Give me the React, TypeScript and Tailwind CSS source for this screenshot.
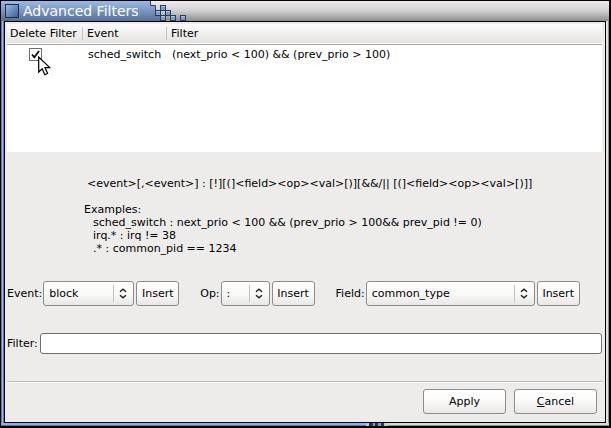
import React from 'react';

// Loose tiles that break off the end of the title tab
const TILES = [
    { x: 10, y: 10 },
    { x: 15, y: 5 },
    { x: 20, y: 10 },
    { x: 15, y: 15 },
    { x: 25, y: 15 },
    { x: 35, y: 15 },
];

const TitleSteps: React.FC = () => (
    <svg width="42" height="20" viewBox="0 0 42 20" className="block shrink-0" aria-hidden="true">
        <defs>
            <linearGradient id="title-blue" x1="0" y1="0" x2="0" y2="1">
                <stop offset="0" stopColor="#9dbbe6" />
                <stop offset="1" stopColor="#557098" />
            </linearGradient>
        </defs>
        <path d="M0 0H5V5H10V10H15V15H20V20H0Z" fill="url(#title-blue)" />
        <path d="M5.5 0V4.5H10.5V9.5H15.5V14.5H20.5V20" fill="none" stroke="#2c3c56" />
        {TILES.map(({ x, y }) => (
            <g key={`${x}-${y}`}>
                <rect x={x} y={y - 1} width="6" height="6" fill="#2c3c56" />
                <rect x={x + 1} y={y} width="4" height="4" fill="#7d9fcf" />
                <path d={`M${x + 1} ${y + 0.5}H${x + 5}`} stroke="#a9c5ec" />
            </g>
        ))}
    </svg>
);

const Cursor: React.FC = () => (
    <svg width="13" height="20" viewBox="0 0 13 20" className="pointer-events-none absolute top-2 left-[9px]" aria-hidden="true">
        <path d="M0.7 1V16L4.2 12.7L6.8 18.7L9.6 17.5L7 11.6H11.8Z" fill="#fff" stroke="#000" strokeWidth="1.2" />
    </svg>
);

type PickerProps = {
    id: string;
    label: string;
    options: string[];
    selectClass: string;
};

const Picker: React.FC<PickerProps> = ({ id, label, options, selectClass }) => (
    <div className="flex items-center">
        <label htmlFor={id} className="mr-px">{label}</label>
        <div className="relative mr-0.5">
            <select
                id={id}
                className={`block h-[25px] appearance-none rounded-[3px] border border-[#8c8c8a] bg-linear-to-b from-white via-[#f9f9f8] to-[#e9e8e6] pl-[5px] ${selectClass}`}
            >
                {options.map((option) => (
                    <option key={option}>{option}</option>
                ))}
            </select>
            <span className="pointer-events-none absolute inset-y-1 right-0 flex w-[21px] items-center justify-center border-l border-[#c2c1bf] pr-0.5">
                <svg width="8" height="11" viewBox="0 0 8 11" fill="none" stroke="#222" strokeWidth="1.5" aria-hidden="true">
                    <path d="M1 3.8L4 1.2L7 3.8M1 7.2L4 9.8L7 7.2" />
                </svg>
            </span>
        </div>
        <button type="button" className="h-[25px] w-[43px] rounded-[3px] border border-[#8c8c8a] bg-linear-to-b from-white via-[#f9f9f8] to-[#e9e8e6]">
            Insert
        </button>
    </div>
);

const App: React.FC = () => {
    return (
        <div className="flex min-h-screen flex-col bg-black pt-px pr-0.5 pb-0.5 pl-px font-['DejaVu_Sans',sans-serif] text-[11px] leading-[13px] text-black">
            <header className="flex h-5 bg-linear-to-b from-[#f0e9ee] via-[#d0d0d0] to-[#8d8d8d]">
                <div className="flex items-center bg-linear-to-b from-[#9dbbe6] to-[#557098] pl-1">
                    <span className="mr-1 size-[14px] border border-[#1b2c48] bg-linear-to-br from-[#9dbbe6] to-[#41608f]" />
                    <h1 className="mr-1.5 text-[14px] leading-5 text-white">Advanced Filters</h1>
                </div>
                <TitleSteps />
            </header>

            <div className="flex grow">
                <div className="w-[3px] shrink-0 border-x border-x-[#5b7cad] bg-[#9dbbe6]" />
                <main className="flex min-w-0 flex-1 flex-col border border-black bg-[#edeceb] px-0.5 pt-0.5">
                    <div className="mr-px h-32 bg-white">
                        <table className="w-full table-fixed border-collapse text-left">
                            <thead>
                                <tr className="h-5 border-b border-[#aaa5a0] bg-linear-to-b from-[#fcfbfb] to-[#e4e3e1]">
                                    <th className="w-[75px] px-[3px] font-normal whitespace-nowrap">Delete Filter</th>
                                    <th className="w-[84px] font-normal">
                                        <div className="border-l border-[#c6c4c1] pl-1">Event</div>
                                    </th>
                                    <th className="font-normal">
                                        <div className="border-l border-[#c6c4c1] pl-1">Filter</div>
                                    </th>
                                </tr>
                            </thead>
                            <tbody>
                                <tr className="h-5">
                                    <td className="pl-[22px]">
                                        <div className="relative size-[13px]">
                                            <input
                                                type="checkbox"
                                                defaultChecked
                                                aria-label="Delete Filter"
                                                className="block size-[13px] appearance-none border border-[#6f6f6d] bg-white"
                                            />
                                            <svg width="13" height="13" viewBox="0 0 13 13" className="pointer-events-none absolute inset-0" aria-hidden="true">
                                                <path d="M3 6.5L5.3 9.3L10 3" fill="none" stroke="#111" strokeWidth="1.9" />
                                            </svg>
                                            <Cursor />
                                        </div>
                                    </td>
                                    <td className="pl-1.5">sched_switch</td>
                                    <td className="pl-1.5">(next_prio &lt; 100) &amp;&amp; (prev_prio &gt; 100)</td>
                                </tr>
                            </tbody>
                        </table>
                    </div>

                    <div className="mt-[25px] pl-[77px] whitespace-pre">
                        <p className="pl-[3px]">{'<event>[,<event>] : [!][(]<field><op><val>[)][&&/|| [(]<field><op><val>[)]]'}</p>
                        <p className="mt-[13px]">Examples:</p>
                        <div className="pl-[9px]">
                            <p>sched_switch : next_prio &lt; 100 &amp;&amp; (prev_prio &gt; 100&amp;&amp; prev_pid != 0)</p>
                            <p>irq.* : irq != 38</p>
                            <p>.* : common_pid == 1234</p>
                        </div>
                    </div>

                    <div className="mt-[26px] flex gap-[21px]">
                        <Picker id="event" label="Event:" options={['block']} selectClass="w-[91px]" />
                        <Picker id="op" label="Op:" options={[':']} selectClass="w-[49px]" />
                        <Picker id="field" label="Field:" options={['common_type']} selectClass="w-[169px]" />
                    </div>

                    <div className="mt-[27px] flex items-center gap-0.5 pr-px">
                        <label htmlFor="filter">Filter:</label>
                        <input id="filter" type="text" className="h-[21px] min-w-0 grow rounded-[3px] border border-[#6f6f6d] bg-white px-1" />
                    </div>

                    <hr className="mt-[27px] h-0.5 border-t border-b border-t-[#bcbbb9] border-b-white" />
                    <div className="mt-1.5 mb-2 flex justify-end gap-2 pr-1.5">
                        <button type="button" className="h-[25px] w-[83px] rounded-[3px] border border-[#8c8c8a] bg-linear-to-b from-white via-[#f9f9f8] to-[#e9e8e6]">Apply</button>
                        <button type="button" className="h-[25px] w-[83px] rounded-[3px] border border-[#8c8c8a] bg-linear-to-b from-white via-[#f9f9f8] to-[#e9e8e6]"><u>C</u>ancel</button>
                    </div>
                </main>
                <div className="w-[3px] shrink-0 border-r border-[#8d8d8d] bg-[#e4e0e2]" />
            </div>

            <footer className="flex h-[3px]">
                <div className="w-3/5 border-b border-[#5b7cad] bg-[#8fb0df]" />
                <svg width="22" height="3" viewBox="0 0 22 3" aria-hidden="true">
                    <path d="M0 0H22V3H0Z" fill="#c9c7c8" />
                    <path d="M3 0H7V3H3ZM9 0H12V3H9ZM15 0H18V3H15Z" fill="#26364f" />
                    <path d="M7 0H9V3H7ZM12 0H15V3H12Z" fill="#7d9fcf" />
                </svg>
                <div className="grow border-b border-[#8d8d8d] bg-[#dcd9da]" />
            </footer>
        </div>
    );
};

export default App;
